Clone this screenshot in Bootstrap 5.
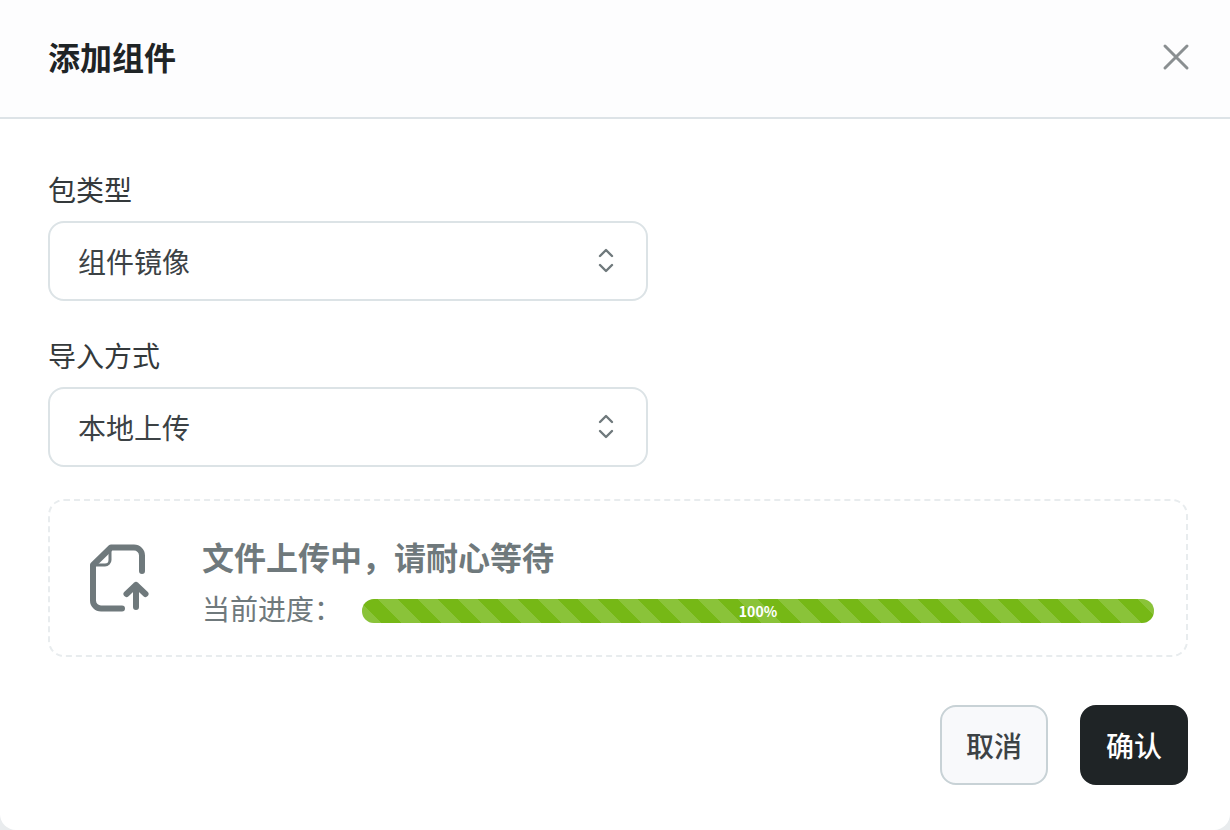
<!DOCTYPE html>
<html lang="zh">
<head>
    <meta charset="UTF-8">
    <meta name="viewport" content="width=device-width, initial-scale=1.0">
    <title>添加组件</title>
    <link href="https://cdn.jsdelivr.net/npm/bootstrap@5.3.0/dist/css/bootstrap.min.css" rel="stylesheet">
    <style>
        html, body { height: 100%; }
        body {
            background: #e9ecee;
            font-family: "Noto Sans CJK SC", "Liberation Sans", sans-serif;
            color: #1f2426;
            overflow: hidden;
        }
        .sheet { height: 830px; background: #fff; border-radius: 16px; }
        .sheet-head {
            height: 119px;
            padding: 0 40px 0 48px;
            background: #fdfdfe;
            border-bottom: 2px solid #dde3e7;
        }
        .sheet-title { font-size: 32px; font-weight: 700; line-height: 1; margin: 0 0 5px; }
        .close-x { background: none; border: 0; padding: 0; width: 28px; height: 28px; margin-bottom: 3px; }
        .sheet-body { padding: 52px 42px 0 48px; }
        .fld-label { font-size: 28px; line-height: 36px; color: #34393b; margin-bottom: 14px; display: block; }
        .fld-box {
            width: 600px;
            height: 80px;
            padding: 0 31px 0 28px;
            border: 2px solid #dce3e6;
            border-radius: 16px;
            font-size: 28px;
            color: #3c4245;
            background: #fff;
        }
        .fld-gap { margin-bottom: 36px; }
        .upload-box {
            height: 158px;
            margin-top: 32px;
            padding: 0 32px 0 38px;
            border: 2px dashed #e8ecee;
            border-radius: 16px;
            gap: 52px;
        }
        .upload-icon { flex: none; }
        .upload-text { padding-top: 5px; }
        .upload-title { font-size: 32px; font-weight: 700; line-height: 40px; color: #6f797c; margin-bottom: 14px; }
        .upload-row { font-size: 28px; line-height: 36px; color: #6f797c; }
        .upload-row span { width: 160px; flex: none; }
        .bar-track { height: 24px; margin-top: 7px; border-radius: 12px; background: #e9ecee; font-size: 14px; }
        .bar-fill {
            background-color: #76b816;
            background-image: linear-gradient(45deg, rgba(255,255,255,.15) 25%, transparent 25%, transparent 50%, rgba(255,255,255,.15) 50%, rgba(255,255,255,.15) 75%, transparent 75%, transparent);
            background-size: 40px 40px;
            background-position: 16px 0;
            font-weight: 700;
            line-height: 24px;
        }
        .foot-row { margin-top: 48px; gap: 32px; }
        .act-btn {
            width: 108px;
            height: 80px;
            padding: 0;
            border-radius: 16px;
            font-size: 28px;
            font-weight: 500;
        }
        .act-cancel { background: #f8f9fb; border: 2px solid #c8d2d6; color: #3c4245; }
        .act-ok { background: #1f2426; border: 2px solid #1f2426; color: #fff; }
    </style>
</head>
<body>
    <div class="sheet">
        <div class="sheet-head d-flex align-items-center justify-content-between">
            <h1 class="sheet-title">添加组件</h1>
            <button class="close-x d-flex" type="button" aria-label="Close">
                <svg width="28" height="28" viewBox="0 0 28 28" fill="none" stroke="#8a8f91" stroke-width="3" stroke-linecap="round"><path d="M3 3 25 25M25 3 3 25"/></svg>
            </button>
        </div>
        <div class="sheet-body">
            <div class="fld-gap">
                <label class="fld-label">包类型</label>
                <div class="fld-box d-flex align-items-center justify-content-between">
                    <span>组件镜像</span>
                    <svg width="18" height="28" viewBox="0 0 18 28" fill="none" stroke="#6f797c" stroke-width="2.4" stroke-linecap="round" stroke-linejoin="round"><path d="M3 9l6-6 6 6M3 18l6 6 6-6"/></svg>
                </div>
            </div>
            <div>
                <label class="fld-label">导入方式</label>
                <div class="fld-box d-flex align-items-center justify-content-between">
                    <span>本地上传</span>
                    <svg width="18" height="28" viewBox="0 0 18 28" fill="none" stroke="#6f797c" stroke-width="2.4" stroke-linecap="round" stroke-linejoin="round"><path d="M3 9l6-6 6 6M3 18l6 6 6-6"/></svg>
                </div>
            </div>
            <div class="upload-box d-flex align-items-center">
                <svg class="upload-icon" width="62" height="68" viewBox="0 0 62 68" fill="none" stroke="#6f797c" stroke-width="6" stroke-linecap="round" stroke-linejoin="round">
                    <path d="M34 64.500H13a8 8 0 0 1-8-8V21L23 3.500h23a8 8 0 0 1 8 8V27"/>
                    <path d="M5 21h12a5 5 0 0 0 5-5V3.500" stroke-width="3"/>
                    <path d="M48 63V41M38.500 50l9.500-9 9.500 9"/>
                </svg>
                <div class="upload-text flex-grow-1">
                    <div class="upload-title">文件上传中，请耐心等待</div>
                    <div class="upload-row d-flex align-items-center">
                        <span>当前进度：</span>
                        <div class="progress bar-track flex-grow-1">
                            <div class="progress-bar bar-fill w-100">100%</div>
                        </div>
                    </div>
                </div>
            </div>
            <div class="foot-row d-flex justify-content-end">
                <button class="btn act-btn act-cancel" type="button">取消</button>
                <button class="btn act-btn act-ok" type="button">确认</button>
            </div>
        </div>
    </div>
    <script src="https://cdn.jsdelivr.net/npm/bootstrap@5.3.0/dist/js/bootstrap.bundle.min.js"></script>
</body>
</html>
